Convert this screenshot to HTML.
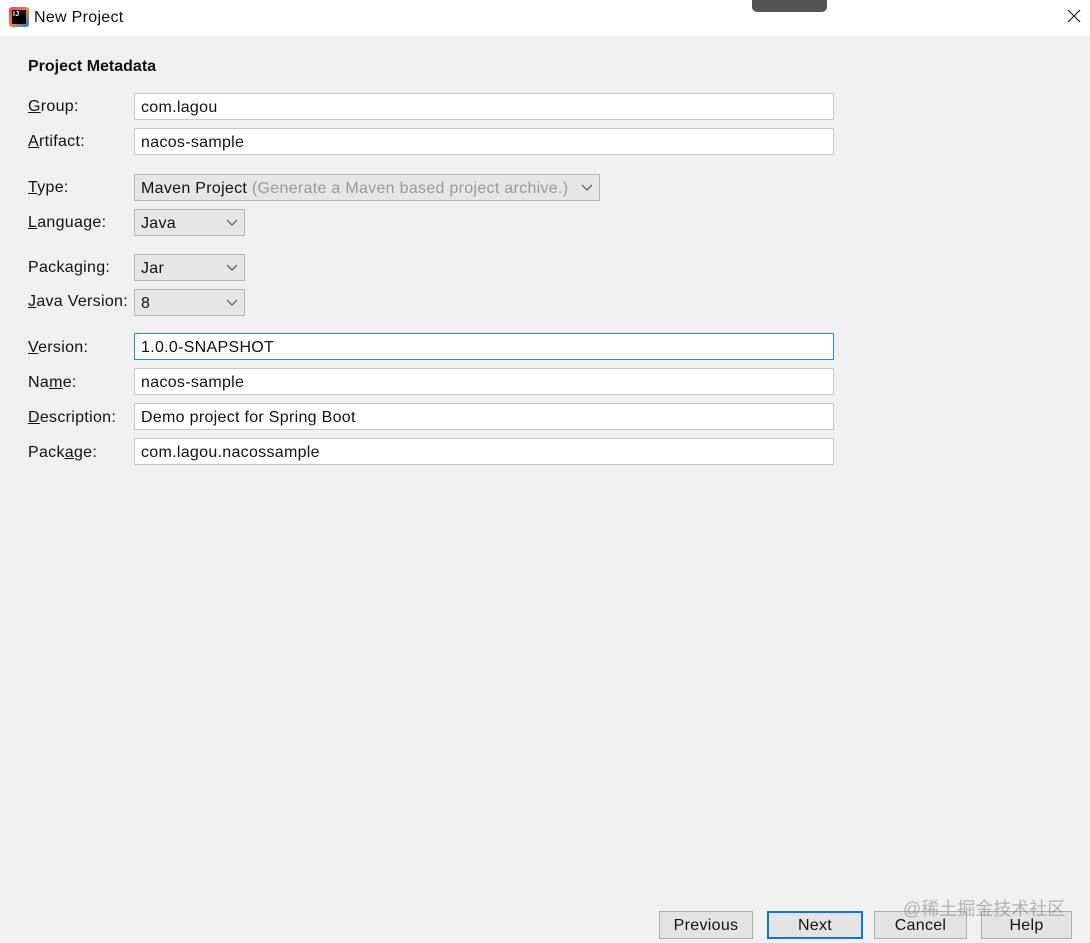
<!DOCTYPE html>
<html><head><style>
*{margin:0;padding:0;box-sizing:border-box}
body{width:1090px;height:943px;background:#f0f0f0;font-family:"Liberation Sans","Noto Sans CJK SC",sans-serif;font-size:16px;letter-spacing:0.3px;color:#111;position:relative;overflow:hidden}
.title{position:absolute;left:0;top:0;width:1090px;height:36px;background:#fff}
.abs{position:absolute}
.lbl{position:absolute;left:28px;font-size:16px}
.f{position:absolute;left:134px;width:700px;height:27px;background:#fff;border:1px solid #c8c8c8;padding-left:6px;line-height:27px;font-size:16px}
.c{position:absolute;left:134px;height:27px;background:#e6e6e6;border:1px solid #b4b4b4;padding-left:6px;line-height:27px;font-size:16px}
.c svg{position:absolute;right:6px;top:9px}
.b{position:absolute;top:911px;height:28px;background:#e3e3e3;border:1px solid #adadad;text-align:center;line-height:28px;font-size:16px}
u{text-decoration:underline}
</style></head><body>
<div class="title">
<div class="abs" style="left:9px;top:7px;width:20px;height:20px;background:linear-gradient(135deg,#ff318c,#fc801d 50%,#087cfa);border-radius:3px"></div>
<div class="abs" style="left:12px;top:10px;width:14px;height:14px;background:#000;color:#fff;font-size:7px;font-weight:bold;line-height:9px;padding-left:1px">IJ</div>
<div class="abs" style="left:34px;top:9px;font-size:16px">New Project</div>
<div class="abs" style="left:752px;top:0;width:75px;height:12px;background:#555;border-radius:0 0 5px 5px"></div>
<svg class="abs" style="left:1067px;top:9px" width="14" height="14"><path d="M1 1L13 13M13 1L1 13" stroke="#222" stroke-width="1.2"/></svg>
</div>
<div class="abs" style="left:28px;top:58px;font-weight:bold;font-size:16px;letter-spacing:0">Project Metadata</div>
<div class="lbl" style="top:98px"><u>G</u>roup:</div><div class="f" style="top:93px">com.lagou</div>
<div class="lbl" style="top:133px"><u>A</u>rtifact:</div><div class="f" style="top:128px">nacos-sample</div>
<div class="lbl" style="top:179px"><u>T</u>ype:</div><div class="c" style="top:174px;width:466px">Maven Project <span style="color:#999">(Generate a Maven based project archive.)</span><svg width="12" height="8"><path d="M1 1L6 6L11 1" fill="none" stroke="#444"/></svg></div>
<div class="lbl" style="top:214px"><u>L</u>anguage:</div><div class="c" style="top:209px;width:111px">Java<svg width="12" height="8"><path d="M1 1L6 6L11 1" fill="none" stroke="#444"/></svg></div>
<div class="lbl" style="top:259px">Packa<u>g</u>ing:</div><div class="c" style="top:254px;width:111px">Jar<svg width="12" height="8"><path d="M1 1L6 6L11 1" fill="none" stroke="#444"/></svg></div>
<div class="lbl" style="top:293px"><u>J</u>ava Version:</div><div class="c" style="top:289px;width:111px">8<svg width="12" height="8"><path d="M1 1L6 6L11 1" fill="none" stroke="#444"/></svg></div>
<div class="lbl" style="top:339px"><u>V</u>ersion:</div><div class="f" style="top:333px;border-color:#2a86d6">1.0.0-SNAPSHOT</div>
<div class="lbl" style="top:374px">Na<u>m</u>e:</div><div class="f" style="top:368px">nacos-sample</div>
<div class="lbl" style="top:409px"><u>D</u>escription:</div><div class="f" style="top:403px">Demo project for Spring Boot</div>
<div class="lbl" style="top:444px">Pack<u>a</u>ge:</div><div class="f" style="top:438px">com.lagou.nacossample</div>
<div class="b" style="left:659px;width:94px">Previous</div>
<div class="b" style="left:767px;width:96px;border:2px solid #0a78d7;line-height:26px">Next</div>
<div class="b" style="left:874px;width:93px">Cancel</div>
<div class="b" style="left:981px;width:91px">Help</div>
<div class="abs" style="left:903px;top:895px;font-size:18px;letter-spacing:0;color:rgba(120,120,120,0.5)">@稀土掘金技术社区</div>
</body></html>
